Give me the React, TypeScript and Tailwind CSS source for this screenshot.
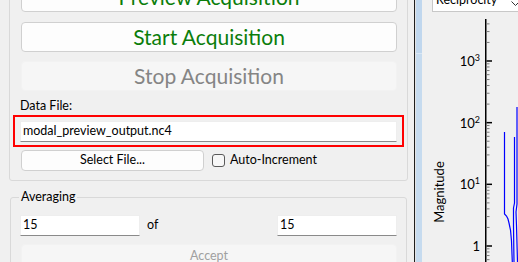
import React from "react";

const DECADE = 61.67;
const yOf = (d: number) => 246 - d * DECADE;

function Plot() {
  const majors: { d: number; label: string; sup?: string }[] = [
    { d: 3, label: "10", sup: "3" },
    { d: 2, label: "10", sup: "2" },
    { d: 1, label: "10", sup: "1" },
    { d: 0, label: "1" },
  ];
  const minors: number[] = [];
  for (let n = -1; n <= 3; n++) {
    for (let k = 2; k <= 9; k++) {
      const y = yOf(n + Math.log10(k));
      if (y >= 20 && y <= 262) minors.push(y);
    }
  }
  return (
    <svg width="96" height="262" className="absolute left-0 top-0">
      <line x1="63.75" y1="19" x2="63.75" y2="262" stroke="#000" strokeWidth="1.5" />
      {minors.map((y, i) => (
        <line key={i} x1="64.5" y1={y} x2="67.5" y2={y} stroke="#7a7a7a" strokeWidth="1" />
      ))}
      {majors.map((m) => (
        <g key={m.d}>
          <line x1="64.5" y1={yOf(m.d)} x2="70" y2={yOf(m.d)} stroke="#000" strokeWidth="1.5" />
          <text
            x="58"
            y={yOf(m.d) + 5}
            textAnchor="end"
            fontSize="13"
            fill="#000"
            fontFamily="Lato, sans-serif"
          >
            {m.label}
            {m.sup && (
              <tspan fontSize="9" dy="-5">
                {m.sup}
              </tspan>
            )}
          </text>
        </g>
      ))}
      <text
        x="0"
        y="0"
        transform="translate(22 192) rotate(-90)"
        textAnchor="middle"
        fontSize="13"
        fill="#000"
        fontFamily="Lato, sans-serif"
      >
        Magnitude
      </text>
      <polyline
        fill="none"
        stroke="#0000ff"
        strokeWidth="1.2"
        points="82.5,132 82.5,214 84.5,216 86,219 87,223 88.5,230 89.5,241 90.3,262"
      />
      <polyline
        fill="none"
        stroke="#0000ff"
        strokeWidth="1.2"
        points="92.5,137 92.5,203 91.5,208 91.5,226 92,262"
      />
      <polyline
        fill="none"
        stroke="#0000ff"
        strokeWidth="1.2"
        points="95,107 95,204 94,212 94.5,226 95.5,262"
      />
    </svg>
  );
}

export default function App() {
  return (
    <div className="w-[518px] h-[262px] overflow-hidden bg-[#f0f0f0] flex font-['Lato',sans-serif] text-[12.5px] text-black">
      {/* left panel */}
      <div className="w-[414px] shrink-0 flex flex-col -mt-[30px]">
        <div className="ml-[9px] w-[399px] border border-[#d9d9d9] rounded-[3px] pl-[11px] pr-[10px] pt-[11px] pb-[9px] flex flex-col">
          <div className="h-[30px] bg-[#fdfdfd] border border-[#d0d0d0] rounded-[4px] flex items-center justify-center text-[21px] text-[#0b7d0b]">
            Preview Acquisition
          </div>
          <div className="mt-[10px] h-[30px] bg-[#fdfdfd] border border-[#d0d0d0] rounded-[4px] flex items-center justify-center text-[21px] text-[#0b7d0b]">
            Start Acquisition
          </div>
          <div className="mt-[9px] h-[30px] bg-[#f6f6f6] border border-[#f2f2f2] rounded-[4px] flex items-center justify-center text-[21px] text-[#858585]">
            Stop Acquisition
          </div>
          <div className="mt-[7px] h-[16px] leading-[16px] -ml-[1px]">Data File:</div>
          <div className="mt-[1px] -ml-[8px] w-[391px] h-[32px] border-2 border-[#ff0000] pl-[5px] pr-[5px] pt-[4px]">
            <div className="h-[21px] bg-white border border-[#eeeeee] border-b-[#8a8a8a] pl-[2px] flex items-center">
              modal_preview_output.nc4
            </div>
          </div>
          <div className="mt-[3px] h-[21px] flex items-center">
            <div className="w-[183px] h-[21px] bg-[#fdfdfd] border border-[#d0d0d0] rounded-[4px] flex items-center justify-center">
              Select File...
            </div>
            <div className="ml-[8px] w-[13px] h-[13px] border border-[#5a5a5a] rounded-[3px] bg-[#f7f7f7]" />
            <span className="ml-[5px]">Auto-Increment</span>
          </div>
        </div>
        <div className="mt-[16px] ml-[10px] w-[397px] border border-[#d9d9d9] rounded-[3px] relative pl-[9px] pt-[17px] pb-[10px]">
          <div className="absolute left-[8px] -top-[9px] px-[2px] bg-[#f0f0f0] leading-[16px]">Averaging</div>
          <div className="w-[377px] flex items-center">
            <div className="w-[120px] h-[21px] bg-white border border-[#eeeeee] border-b-[#8a8a8a] pl-[2px] flex items-center">
              15
            </div>
            <span className="ml-[7px]">of</span>
            <div className="ml-auto w-[120px] h-[21px] bg-white border border-[#eeeeee] border-b-[#8a8a8a] pl-[2px] flex items-center">
              15
            </div>
          </div>
          <div className="mt-[8px] ml-[1px] w-[376px] h-[24px] bg-[#f6f6f6] border border-[#f2f2f2] rounded-[4px] flex items-center justify-center text-[#a0a0a0]">
            Accept
          </div>
        </div>
      </div>
      {/* splitter */}
      <div className="w-[1px] shrink-0 bg-[#1e1e1e]" />
      <div className="w-[1px] shrink-0 bg-[#e4e4e4]" />
      <div className="w-[6px] shrink-0 flex flex-col">
        <div className="h-[53px] bg-[#c0d7ee]" />
        <div className="h-[1px] bg-[#d9e7f5]" />
        <div className="flex-1 bg-[#c6dbef]" />
      </div>
      {/* plot */}
      <div className="relative flex-1 overflow-hidden">
        <Plot />
        <div className="absolute left-[10px] -top-[10px] w-[100px] h-[22px] bg-white border border-[#c8c8c8] flex items-center pl-[3px]">
          <span className="-mt-[1px]">Reciprocity</span>
          <svg className="absolute left-[78px] top-[10px]" width="9" height="6" viewBox="0 0 9 6">
            <polyline points="0.5,0.5 4.5,4.5 8.5,0.5" fill="none" stroke="#333" strokeWidth="1" />
          </svg>
        </div>
      </div>
    </div>
  );
}
